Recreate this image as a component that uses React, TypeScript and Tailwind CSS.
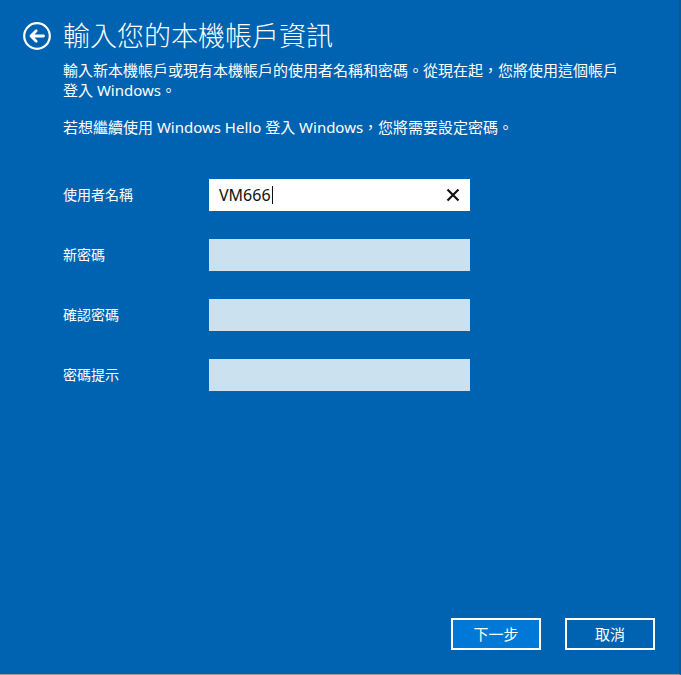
const fields = ['新密碼', '確認密碼', '密碼提示'];

function BackIcon() {
  return (
    <svg width="28" height="28" viewBox="0 0 28 28" fill="none">
      <circle cx="14" cy="14" r="12.8" stroke="white" strokeWidth="2.2" />
      <path d="M8 14h12.5M13.2 8.8L8 14l5.2 5.2" stroke="white" strokeWidth="2.8" strokeLinecap="round" strokeLinejoin="round" />
    </svg>
  );
}

export default function App() {
  return (
    <div
      className="w-[681px] h-[675px] bg-[#0063b1] text-white flex flex-col border-r-2 border-r-[#0b579a] border-b border-b-[#9c9c9c] overflow-hidden"
      style={{ fontFamily: "'Noto Sans', 'Noto Sans CJK TC', sans-serif" }}
    >
      {/* Header */}
      <div className="flex items-center pt-[18px] pl-[23px]">
        <BackIcon />
        <h1 className="ml-[12px] text-[27px] leading-[36px] font-light">輸入您的本機帳戶資訊</h1>
      </div>

      <div className="pl-[63px] pr-[40px] text-[15px] leading-[20px]">
        <p className="mt-[6px]">
          輸入新本機帳戶或現有本機帳戶的使用者名稱和密碼。從現在起，您將使用這個帳戶
          <br />
          登入 Windows。
        </p>
        <p className="mt-[17px]">若想繼續使用 Windows Hello 登入 Windows，您將需要設定密碼。</p>

        {/* Form */}
        <div className="mt-[42px] flex flex-col gap-[28px]">
          <div className="flex items-center">
            <label className="w-[146px] text-[14px]">使用者名稱</label>
            <div className="w-[261px] h-[32px] bg-white flex items-center pl-[10px] pr-[10px]">
              <span className="text-[16px] text-[#111] leading-none">VM666</span>
              <span className="w-px h-[18px] bg-[#111] ml-[1px]" />
              <svg className="ml-auto" width="14" height="14" viewBox="0 0 14 14">
                <path d="M1.5 1.5l11 11M12.5 1.5l-11 11" stroke="#111" strokeWidth="2.2" />
              </svg>
            </div>
          </div>
          {fields.map((f) => (
            <div key={f} className="flex items-center">
              <label className="w-[146px] text-[14px]">{f}</label>
              <div className="w-[261px] h-[32px] bg-[#cce1f0]" />
            </div>
          ))}
        </div>
      </div>

      {/* Buttons */}
      <div className="mt-auto flex justify-end gap-[24px] pr-[24px] pb-[24px]">
        <button className="w-[90px] h-[32px] border-2 border-white bg-[#0078d7] text-[15px]">下一步</button>
        <button className="w-[90px] h-[32px] border-2 border-white bg-[#0063b1] text-[15px]">取消</button>
      </div>
    </div>
  );
}
